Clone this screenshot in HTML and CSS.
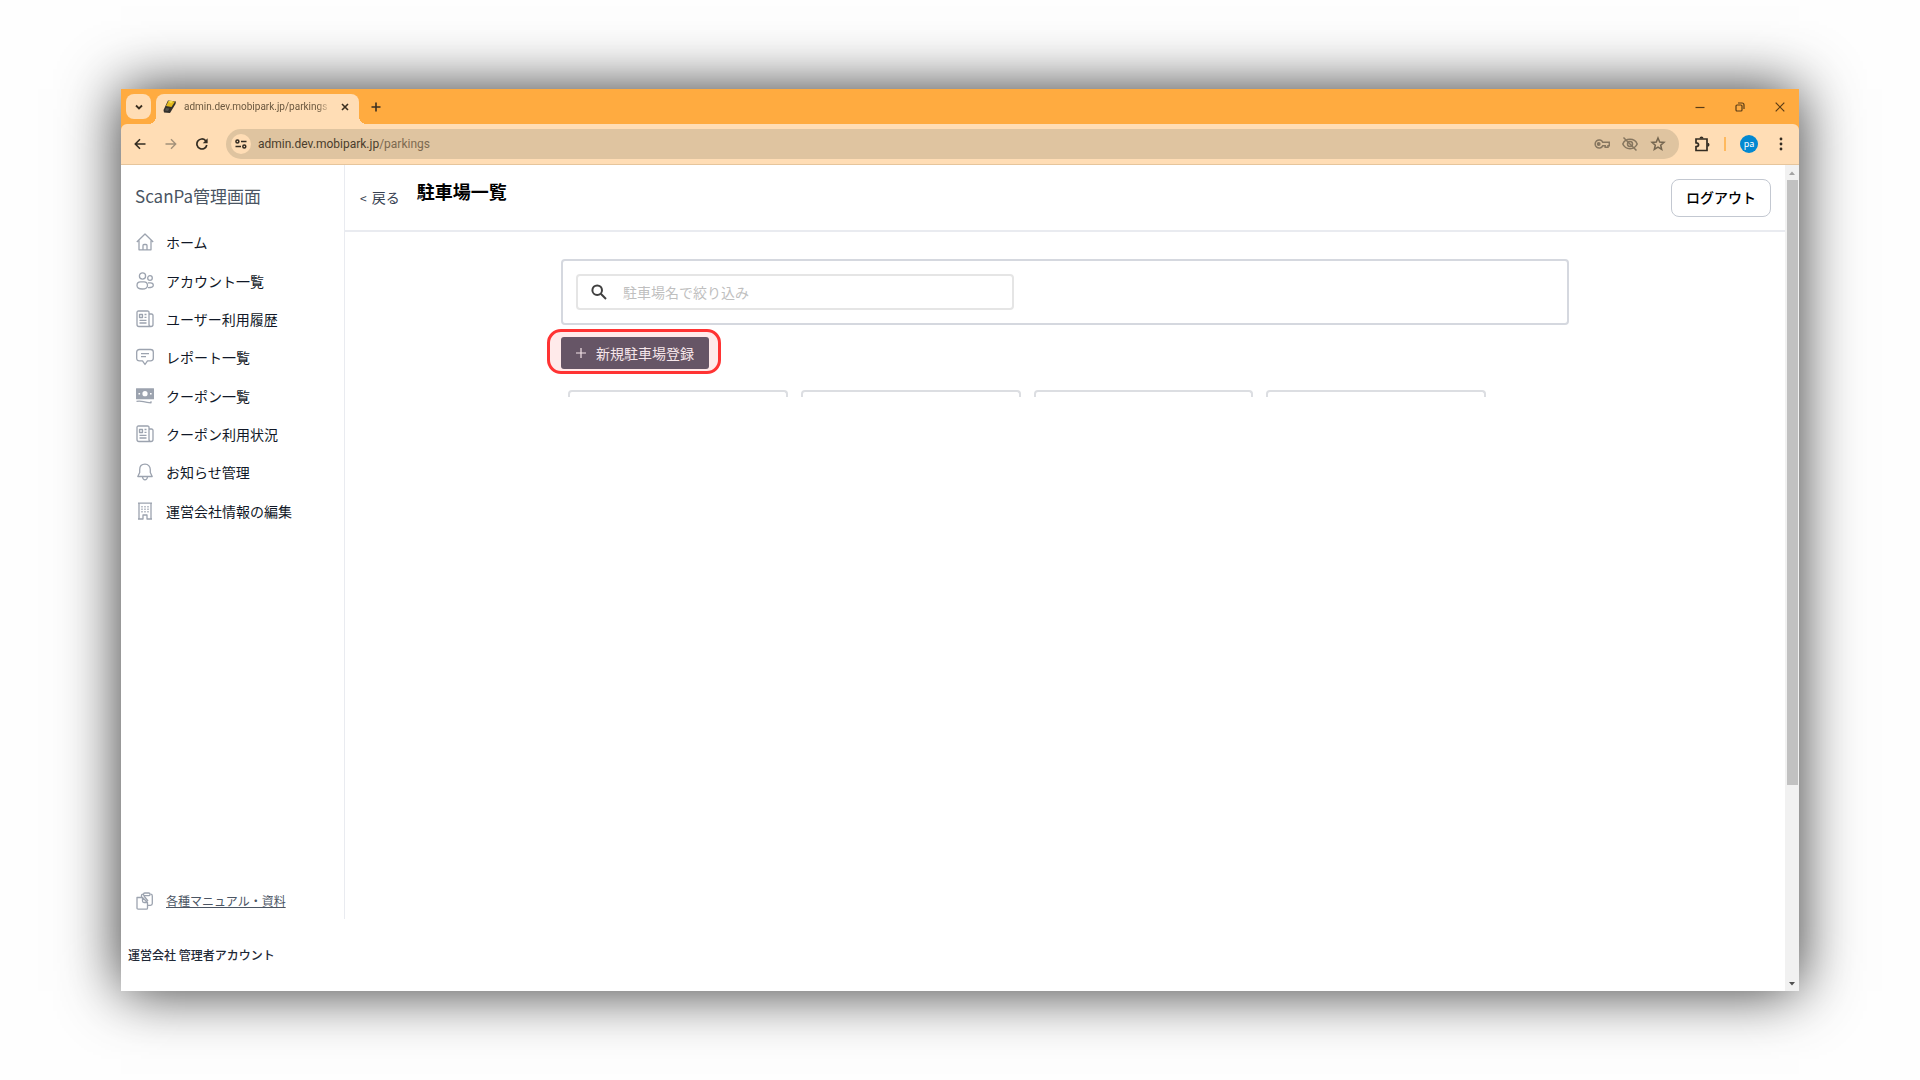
FILE: index.html
```html
<!DOCTYPE html>
<html lang="ja">
<head>
    <meta charset="UTF-8">
    <meta name="viewport" content="width=device-width, initial-scale=1.0">
    <title>駐車場一覧 | ScanPa管理画面</title>
    <link rel="stylesheet" href="styles.css">
</head>
<body>

    <div class="browser">
        <!-- Tab strip -->
        <div class="tab-bar">
            <button class="tab-search" aria-label="タブを検索">
                <svg width="10" height="10" viewBox="0 0 10 10"><path d="M2 3.5 5 6.5 8 3.5" fill="none" stroke="#3b2f20" stroke-width="1.8"/></svg>
            </button>
            <div class="tab">
                <svg width="16" height="16" viewBox="0 0 16 16">
                    <path d="M6 1.5 14 2.5 13.5 5 8 14 2 13.5 1.5 11z" fill="#33302c"/>
                    <path d="M6.5 2 13 2.5 9.5 8 4 7z" fill="#e3b81c"/>
                    <path d="M6.5 2.5 9 1.5 11 2.5 9 4.5z" fill="#f5dc4e"/>
                    <path d="M4 9 7.5 9.5 6 12 3 11.5z" fill="#55524e"/>
                </svg>
                <span class="tab-title">admin.dev.mobipark.jp/parkings</span>
                <button class="icon-button tab-close" aria-label="閉じる">
                    <svg width="8" height="8" viewBox="0 0 8 8"><path d="M1 1 7 7M7 1 1 7" stroke="#3b2f20" stroke-width="1.6"/></svg>
                </button>
            </div>
            <button class="icon-button tab-new" aria-label="新しいタブ">
                <svg width="10" height="10" viewBox="0 0 10 10"><path d="M5 .5v9M.5 5h9" stroke="#3b2f20" stroke-width="1.6"/></svg>
            </button>
            <div class="window-controls">
                <button class="icon-button" aria-label="最小化">
                    <svg width="10" height="10" viewBox="0 0 10 10"><path d="M.5 5.5h9" stroke="#5a3c16" stroke-width="1.2"/></svg>
                </button>
                <button class="icon-button" aria-label="元に戻す">
                    <svg width="10" height="10" viewBox="0 0 10 10" fill="none" stroke="#5a3c16" stroke-width="1.2"><rect x="1" y="3" width="6" height="6" rx="1"/><path d="M3 1h4a2 2 0 0 1 2 2v4"/></svg>
                </button>
                <button class="icon-button" aria-label="ウィンドウを閉じる">
                    <svg width="10" height="10" viewBox="0 0 10 10"><path d="M.7 .7 9.3 9.3M9.3 .7 .7 9.3" stroke="#5a3c16" stroke-width="1.2"/></svg>
                </button>
            </div>
        </div>

        <!-- Address bar -->
        <div class="toolbar">
            <div class="nav-buttons">
                <button class="icon-button" aria-label="戻る">
                    <svg width="12" height="12" viewBox="0 0 12 12"><path d="M11.5 6H1.5M6 1.2 1.3 6 6 10.8" fill="none" stroke="#332c22" stroke-width="1.6"/></svg>
                </button>
                <button class="icon-button" aria-label="進む">
                    <svg width="12" height="12" viewBox="0 0 12 12"><path d="M.5 6h10M6 1.2 10.7 6 6 10.8" fill="none" stroke="#a3917a" stroke-width="1.4"/></svg>
                </button>
                <button class="icon-button" aria-label="再読み込み">
                    <svg width="12" height="12" viewBox="0 0 12 12"><path d="M10.8 7A5 5 0 1 1 9.6 2.6L10.6 3.8" fill="none" stroke="#332c22" stroke-width="1.7"/><path d="M11.6 .3v5H6.8z" fill="#332c22"/></svg>
                </button>
            </div>
            <div class="address">
                <button class="site-info" aria-label="サイト情報">
                    <svg width="12" height="10" viewBox="0 0 12 10" fill="none" stroke="#332c22" stroke-width="1.5"><circle cx="2.4" cy="2.4" r="1.5"/><path d="M6 2.4h5.5M.5 7.6H6"/><circle cx="9.3" cy="7.6" r="1.5"/></svg>
                </button>
                <span class="url">admin.dev.mobipark.jp<span class="url-path">/parkings</span></span>
                <div class="address-icons">
                    <svg width="16" height="16" viewBox="0 0 16 16" fill="none" stroke="#86765f" stroke-width="1.5"><path d="M8.7 6.2A4 4 0 1 0 8.7 9.8H11.2V11.3H14V9.8H15.3V6.2z"/><circle cx="4.7" cy="8" r="1.2" fill="#86765f"/></svg>
                    <svg width="16" height="16" viewBox="0 0 16 16" fill="none" stroke="#86765f" stroke-width="1.5"><path d="M.8 8C3.5 1.8 12.5 1.8 15.200 8 12.500 14.200 3.500 14.200 .8 8z"/><circle cx="8" cy="8" r="2.5"/><path d="M1.500 1.500 14.500 14.500"/></svg>
                    <svg width="16" height="16" viewBox="0 0 16 16" fill="none" stroke="#756650" stroke-width="1.5"><path d="M8 2 9.700 6 14 6.400 10.700 9.200 11.700 13.500 8 11.200 4.300 13.500 5.300 9.200 2 6.400 6.300 6z"/></svg>
                </div>
            </div>
            <div class="toolbar-right">
                <button class="icon-button" aria-label="拡張機能">
                    <svg width="16" height="16" viewBox="0 0 16 16" fill="none" stroke="#332c22" stroke-width="1.700"><path d="M2 3h11v11.500H2V10.700C5.400 10.500 5.400 7 2 6.800z"/><path d="M5.500 2.500a2 2 0 0 1 4 0zM13.500 6.700a2 2 0 0 1 0 4z" fill="#332c22" stroke="none"/></svg>
                </button>
                <span class="separator"></span>
                <button class="avatar" aria-label="プロフィール">pa</button>
                <button class="icon-button" aria-label="メニュー">
                    <svg width="4" height="14" viewBox="0 0 4 14" fill="#332c22"><circle cx="2" cy="2" r="1.400"/><circle cx="2" cy="7" r="1.400"/><circle cx="2" cy="12" r="1.400"/></svg>
                </button>
            </div>
        </div>

        <div class="viewport">
            <div class="page">
                <div class="page-body">
                    <!-- Sidebar -->
                    <nav class="sidebar">
                        <div class="brand">ScanPa管理画面</div>
                        <div class="menu">
                            <a class="menu-item" href="#">
                                <svg class="menu-icon" viewBox="0 0 18 18"><path d="M.8 9 9 1 17.200 9M3 7.500V16.800H15V7.500M7 16.500V12.500Q7 11.500 8 11.500H10Q11 11.500 11 12.500V16.500"/></svg>
                                ホーム
                            </a>
                            <a class="menu-item" href="#">
                                <svg class="menu-icon" viewBox="0 0 18 18"><circle cx="6.500" cy="4" r="3.100"/><circle cx="14" cy="6" r="2.300"/><path d="M1 13.500Q1 9.800 4.500 9.800H8Q11.500 9.800 11.500 13.500 11.500 17 6.300 17 1 17 1 13.500zM12 10.800H14.500Q17.300 10.800 17.300 13.200 17.300 15.700 12 15.600"/></svg>
                                アカウント一覧
                            </a>
                            <a class="menu-item" href="#">
                                <svg class="menu-icon" viewBox="0 0 18 18"><path d="M13 2.500Q13 1 11.500 1H2.500Q1 1 1 2.500V14.500Q1 16.500 3 16.500H15Q17 16.500 17 14.500V5.500Q17 4 15.500 4H13M13 1.500V14.500Q13 16.500 15 16.500"/><path d="M3.500 4.500h3v3h-3zM8.500 4.500h2M8.500 7.300h2M3.500 10.300h7M3.500 13h7"/></svg>
                                ユーザー利用履歴
                            </a>
                            <a class="menu-item" href="#">
                                <svg class="menu-icon" viewBox="0 0 18 18"><path d="M3.500 1.500H14.500Q17.300 1.500 17.300 4V10.300Q17.300 12.800 14.500 12.800H11.500L9 16.500 6.500 12.800H3.500Q.7 12.800.7 10.300V4Q.7 1.500 3.500 1.500zM5 5.700h8M5 8.700h5"/></svg>
                                レポート一覧
                            </a>
                            <a class="menu-item" href="#">
                                <svg class="menu-icon" viewBox="0 0 18 18"><path d="M.5 2h17v9.500H.5z" fill="#9ca3af"/><circle cx="9" cy="6.700" r="2.600" fill="#fff" stroke="none"/><path d="M2.500 6h1.600v1.600H2.500zM14 6h1.600v1.600H14z" fill="#fff" stroke="none"/><path d="M.5 14.300Q4 13.800 7.500 14.600T15 15.800V14.300"/></svg>
                                クーポン一覧
                            </a>
                            <a class="menu-item" href="#">
                                <svg class="menu-icon" viewBox="0 0 18 18"><path d="M13 2.500Q13 1 11.500 1H2.500Q1 1 1 2.500V14.500Q1 16.500 3 16.500H15Q17 16.500 17 14.500V5.500Q17 4 15.500 4H13M13 1.500V14.500Q13 16.500 15 16.500"/><path d="M3.500 4.500h3v3h-3zM8.500 4.500h2M8.500 7.300h2M3.500 10.300h7M3.500 13h7"/></svg>
                                クーポン利用状況
                            </a>
                            <a class="menu-item" href="#">
                                <svg class="menu-icon" viewBox="0 0 18 18"><path d="M9 1.200C5.500 1.200 3.700 3.700 3.700 6.700V9.500L1.800 13.500H16.200L14.300 9.500V6.700C14.300 3.700 12.500 1.200 9 1.200zM6.500 14Q7 16.800 9 16.800T11.500 14"/></svg>
                                お知らせ管理
                            </a>
                            <a class="menu-item" href="#">
                                <svg class="menu-icon" viewBox="0 0 18 18"><path d="M2 1.200H16M3 1.200V17M15 1.200V17M2 17H7V13H11V17H16"/><path d="M6 4v6.500M9 4v6.500M12 4v6.500" stroke-dasharray="1.500 1"/></svg>
                                運営会社情報の編集
                            </a>
                        </div>
                        <div class="manual">
                            <svg class="menu-icon" viewBox="0 0 18 18"><path d="M1 5.500H6.500L11.500 10.500V16Q11.500 17.200 10.300 17.200H2.200Q1 17.200 1 16zM6.500 5.500V9Q6.500 10.500 8 10.500H11.500M5.500 5.500V3.500Q5.500 2.200 7 2.200M14.500 2.200Q16.300 2.200 16.300 4V11.500Q16.300 13.300 14.500 13.300H11.500M8 4 12 9"/><rect x="7.500" y="1" width="6.500" height="2.700" rx="1.300"/></svg>
                            <a href="#">各種マニュアル・資料</a>
                        </div>
                    </nav>

                    <!-- Main -->
                    <main class="main">
                        <header class="header">
                            <a class="back" href="#"><span class="back-mark">&lt;</span> 戻る</a>
                            <h1>駐車場一覧</h1>
                            <button class="logout">ログアウト</button>
                        </header>
                        <div class="container">
                            <div class="filter">
                                <label class="search">
                                    <svg width="16" height="16" viewBox="0 0 16 16" fill="none" stroke="#404040" stroke-width="2"><circle cx="6.200" cy="6.200" r="4.800"/><path d="M9.800 9.800 15 15"/></svg>
                                    <input type="text" aria-label="駐車場名で絞り込み" placeholder="駐車場名で絞り込み">
                                </label>
                            </div>
                            <div class="actions">
                                <span class="highlight"></span>
                                <button class="register">
                                    <svg width="10" height="10" viewBox="0 0 10 10"><path d="M5 0v10M0 5h10" stroke="#f3e3e8" stroke-width="1.200"/></svg>
                                    新規駐車場登録
                                </button>
                            </div>
                            <div class="cards">
                                <div class="card"></div>
                                <div class="card"></div>
                                <div class="card"></div>
                                <div class="card"></div>
                            </div>
                        </div>
                    </main>
                </div>
                <footer class="account">運営会社 管理者アカウント</footer>
            </div>

            <!-- Scrollbar -->
            <div class="scrollbar">
                <svg width="14" height="15" viewBox="0 0 14 15"><path d="M4 10 7 6.500 10 10z" fill="#a3a3a3"/></svg>
                <div class="scroll-track"><div class="scroll-thumb"></div></div>
                <svg width="14" height="15" viewBox="0 0 14 15"><path d="M4 6 7 9.500 10 6z" fill="#505050"/></svg>
            </div>
        </div>
    </div>

</body>
</html>
```
FILE: styles.css
```css
* {
    margin: 0;
    padding: 0;
    box-sizing: border-box;
    font-family: "Noto Sans CJK JP", "Noto Sans", sans-serif;
}

body {
    display: flex;
    height: 100vh;
    padding: 89px 121px;
    background-color: #fefefe;
    color: #1f2937;
    font-size: 14px;
}

button {
    border: none;
    background: none;
    cursor: pointer;
}

svg {
    display: block;
    flex: none;
}

a {
    color: inherit;
    text-decoration: none;
}

.browser {
    flex: 1;
    display: flex;
    flex-direction: column;
    background-color: #ffab40;
    box-shadow: 0 0 56px rgba(0, 0, 0, 0.8);
}

.icon-button {
    display: flex;
    align-items: center;
    justify-content: center;
}

/* Tab strip */
.tab-bar {
    display: flex;
    align-items: center;
    height: 35px;
    padding-left: 5px;
}

.tab-search {
    display: flex;
    align-items: center;
    justify-content: center;
    width: 25px;
    height: 25px;
    border-radius: 8px;
    background-color: #ffddb5;
}

.tab {
    position: relative;
    align-self: flex-end;
    display: flex;
    align-items: center;
    width: 203px;
    height: 30px;
    margin-left: 5px;
    padding: 0 10px 4px 6px;
    border-radius: 8px 8px 0 0;
    background-color: #ffddb5;
}

.tab::before,
.tab::after {
    content: "";
    position: absolute;
    bottom: 0;
    width: 8px;
    height: 8px;
}

.tab::before {
    left: -8px;
    background: radial-gradient(circle at 0 0, transparent 8px, #ffddb5 8px);
}

.tab::after {
    right: -8px;
    background: radial-gradient(circle at 100% 0, transparent 8px, #ffddb5 8px);
}

.tab-title {
    flex: 1;
    margin: 0 10px 0 6px;
    overflow: hidden;
    white-space: nowrap;
    font-family: Roboto, sans-serif;
    font-size: 10px;
    line-height: 16px;
    color: #6b583f;
    -webkit-mask-image: linear-gradient(to left, transparent, #000 14px);
    mask-image: linear-gradient(to left, transparent, #000 14px);
}

.tab-new {
    margin-left: 12px;
}

.window-controls {
    display: flex;
    gap: 30px;
    margin-left: auto;
    padding-right: 14px;
}

/* Address bar */
.toolbar {
    display: flex;
    align-items: center;
    height: 41px;
    padding: 0 16px 0 13px;
    border-bottom: 1px solid #e6c59c;
    border-radius: 6px 6px 0 0;
    background-color: #ffddb5;
}

.nav-buttons {
    display: flex;
    gap: 19px;
}

.address {
    flex: 1;
    display: flex;
    align-items: center;
    height: 30px;
    margin-left: 18px;
    padding: 0 13px 0 5px;
    border-radius: 15px;
    background-color: #dfc4a0;
}

.site-info {
    display: flex;
    align-items: center;
    justify-content: center;
    width: 20px;
    height: 20px;
    border-radius: 50%;
    background-color: #ffddb5;
}

.url,
.url-path {
    font-family: Roboto, sans-serif;
}

.url {
    margin-left: 7px;
    font-size: 12px;
    line-height: 18px;
    color: #4a3d2c;
}

.url-path {
    color: #7d6a50;
}

.address-icons {
    display: flex;
    gap: 12px;
    margin-left: auto;
}

.toolbar-right {
    display: flex;
    align-items: center;
    gap: 14px;
    margin-left: 15px;
}

.separator {
    width: 2px;
    height: 14px;
    background-color: #ffb95e;
}

.avatar {
    width: 18px;
    height: 18px;
    border-radius: 50%;
    background-color: #0288d1;
    color: #fff;
    font-size: 9px;
    line-height: 16px;
}

.toolbar-right .avatar {
    margin-right: 7px;
}

/* Page */
.viewport {
    flex: 1;
    display: flex;
    background-color: #fff;
}

.page {
    flex: 1;
    display: flex;
    flex-direction: column;
}

.page-body {
    flex: 1;
    display: flex;
}

.sidebar {
    display: flex;
    flex-direction: column;
    width: 224px;
    border-right: 1px solid #e9ebf0;
}

.brand {
    padding: 19px 14px 15px;
    font-size: 17px;
    line-height: 24px;
    color: #4b5563;
}

.menu {
    display: grid;
    grid-auto-rows: 1fr;
    min-height: 307px;
}

.menu-item {
    display: flex;
    align-items: center;
    gap: 12px;
    padding-left: 15px;
    color: #111827;
}

.menu-icon {
    width: 18px;
    height: 18px;
    fill: none;
    stroke: #9ca3af;
    stroke-width: 1.3;
    stroke-linejoin: round;
}

.manual {
    display: flex;
    align-items: center;
    gap: 12px;
    margin-top: auto;
    padding: 0 0 9px 15px;
    font-size: 12px;
    line-height: 18px;
    color: #4b5563;
}

.manual a {
    text-decoration: underline;
}

.account {
    padding: 27px 7px;
    font-size: 12px;
    font-weight: 500;
    line-height: 18px;
}

.main {
    flex: 1;
}

.header {
    display: flex;
    align-items: flex-start;
    padding: 14px 14px 13px 15px;
    border-bottom: 2px solid #e9ebf0;
}

.back {
    line-height: 36px;
    color: #374151;
}

.back-mark {
    margin-right: 2px;
    font-size: 12px;
}

h1 {
    margin-left: 17px;
    font-size: 18px;
    line-height: 24px;
    color: #000;
}

.logout {
    width: 100px;
    height: 38px;
    margin-left: auto;
    padding-bottom: 2px;
    border: 1px solid #c3c8d1;
    border-radius: 8px;
    font-size: 14px;
    font-weight: 500;
    color: #000;
}

.container {
    width: 70%;
    margin: 27px auto 0;
}

.filter {
    padding: 13px;
    border: 2px solid #d5d8df;
    border-radius: 4px;
}

.search {
    display: flex;
    align-items: center;
    gap: 16px;
    width: 438px;
    height: 36px;
    padding: 0 13px;
    border: 2px solid #e5e5e5;
    border-radius: 4px;
}

.search input {
    flex: 1;
    border: none;
    outline: none;
    font-size: 14px;
}

.search input::placeholder {
    color: #bfbfbf;
}

.actions {
    position: relative;
    display: flex;
    margin-top: 12px;
}

.register {
    position: relative;
    display: flex;
    align-items: center;
    gap: 10px;
    height: 32px;
    padding: 0 15px;
    border-radius: 3px;
    background-color: #665566;
    color: #f6e6ea;
    font-size: 14px;
}

/* Red frame around the register button */
.highlight {
    position: absolute;
    top: -8px;
    left: -14px;
    width: 174px;
    height: 45px;
    border: 3px solid #ff3333;
    border-radius: 14px;
    background-color: rgba(255, 51, 51, 0.1);
}

.cards {
    display: grid;
    grid-template-columns: repeat(4, 1fr);
    gap: 13px;
    margin: 21px 83px 0 7px;
}

.card {
    height: 7px;
    border: 2px solid #dcdee2;
    border-bottom: none;
    border-radius: 4px 4px 0 0;
}

/* Scrollbar */
.scrollbar {
    display: flex;
    flex-direction: column;
    width: 14px;
    background-color: #f1f1f1;
}

.scroll-track {
    flex: 1;
    padding: 0 1px 0 2px;
}

.scroll-thumb {
    height: 76%;
    background-color: #c1c1c1;
}
```
